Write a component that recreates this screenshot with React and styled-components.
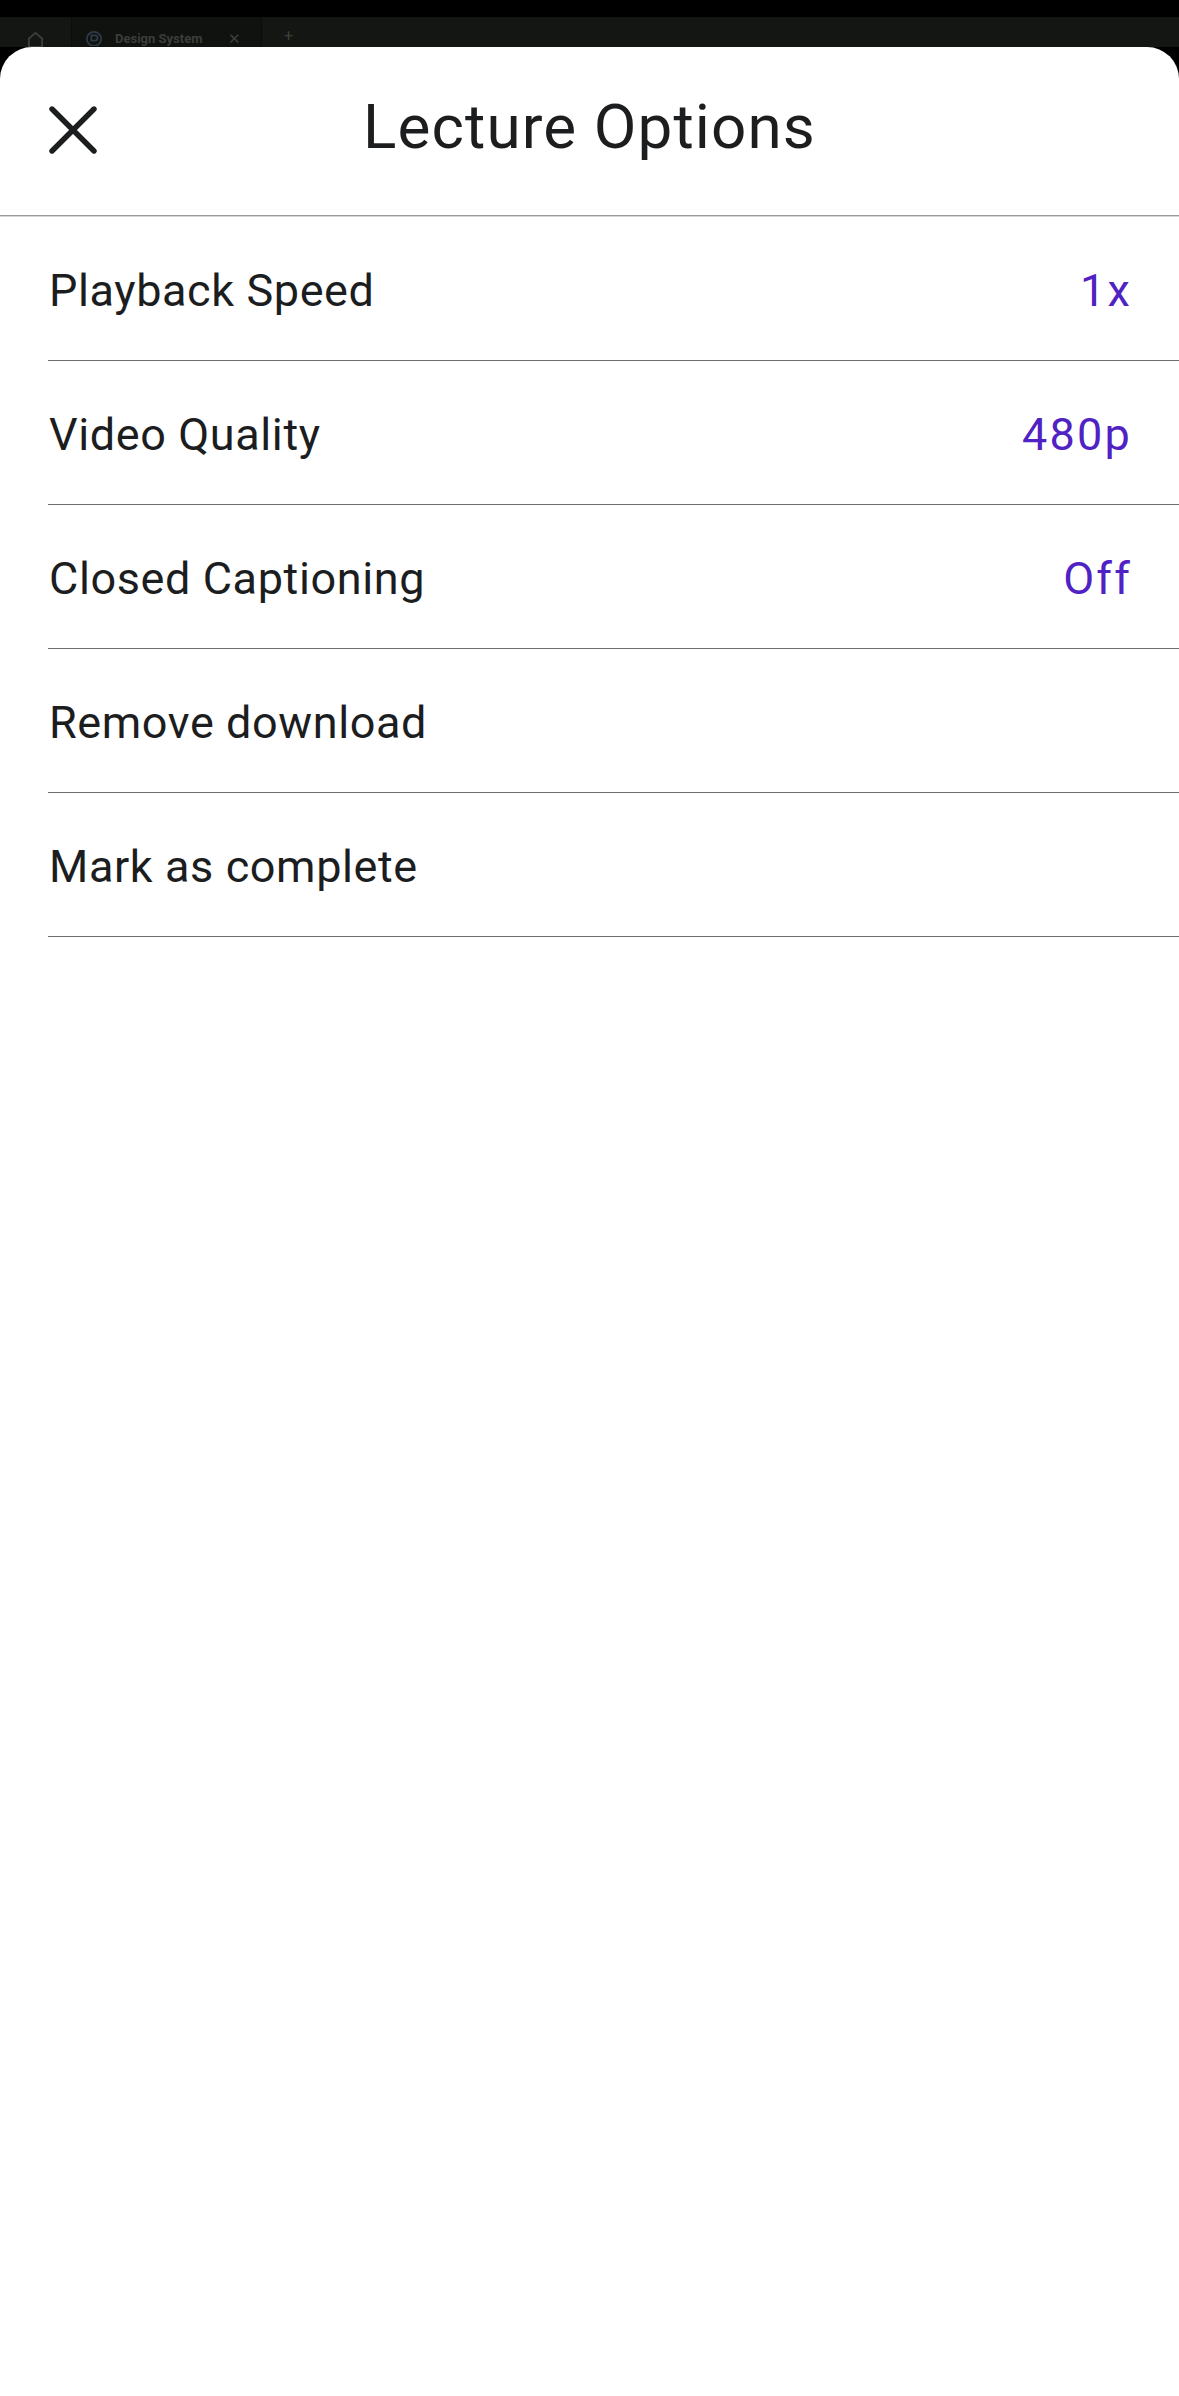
import React from "react";
import styled, { createGlobalStyle } from "styled-components";

const GlobalStyle = createGlobalStyle`
  html, body {
    margin: 0;
    padding: 0;
    background: #000;
  }
  body {
    font-family: Roboto, "Liberation Sans", sans-serif;
    -webkit-font-smoothing: antialiased;
  }
`;

const colors = {
  text: "#1c1d1f",
  purple: "#5022c3",
  divider: "#6e6e6e",
  faint: "#3b3e3a",
};

const Screen = styled.div`
  width: 1179px;
  min-height: 2396px;
  display: flex;
  flex-direction: column;
  background: #000;
`;

const StatusBar = styled.div`
  height: 17px;
  background: #000;
`;

const TabBar = styled.div`
  height: 30px;
  overflow: hidden;
  display: flex;
  align-items: stretch;
  background: #141613;
  color: ${colors.faint};
  font-size: 13px;
  line-height: 14px;
  font-weight: 700;
`;

const HomeSlot = styled.div`
  width: 72px;
  display: flex;
  align-items: flex-end;
  justify-content: center;
  box-sizing: border-box;
  border-right: 1px solid #0b0c0a;
`;

const Tab = styled.div`
  width: 190px;
  display: flex;
  align-items: flex-end;
  gap: 12px;
  padding: 0 0 1px 13px;
  box-sizing: border-box;
  background: #10120f;
  border-right: 1px solid #0b0c0a;
`;

const TabLabel = styled.span`
  flex: 1;
  white-space: nowrap;
`;

const TabClose = styled.span`
  padding-right: 20px;
  font-weight: 400;
  font-size: 15px;
`;

const PlusSlot = styled.div`
  display: flex;
  align-items: flex-end;
  padding: 0 0 2px 22px;
  font-size: 16px;
  line-height: 18px;
  font-weight: 400;
`;

const Sheet = styled.div`
  flex: 1;
  background: #fff;
  border-radius: 32px 32px 0 0;
  display: flex;
  flex-direction: column;
`;

const Header = styled.header`
  height: 168px;
  display: grid;
  grid-template-columns: 1fr auto 1fr;
  align-items: center;
  padding: 0 49px;
  border-bottom: 1px solid #9a9a9a;
  box-shadow: 0 1px 0 #d4d6d8;
  margin-bottom: 1px;
`;

const CloseButton = styled.button`
  width: 48px;
  height: 48px;
  padding: 0;
  border: none;
  background: none;
  justify-self: start;
  display: flex;
  margin-bottom: 2px;
`;

const Title = styled.h1`
  margin: 0 0 10px;
  font-size: 62px;
  font-weight: 400;
  color: ${colors.text};
  letter-spacing: 1.1px;
`;

const OptionList = styled.ul`
  list-style: none;
  margin: 0;
  padding: 0 0 0 48px;
`;

const OptionRow = styled.li`
  display: flex;
  align-items: center;
  justify-content: space-between;
  padding: 3px 47px 0 0;
  box-sizing: border-box;
  height: 144px;
  border-bottom: 1px solid ${colors.divider};
  font-size: 45px;
  color: ${colors.text};
`;

const OptionLabel = styled.span`
  padding-left: 1px;
  letter-spacing: 0.6px;
`;

const OptionValue = styled.span`
  color: ${colors.purple};
  letter-spacing: 2.2px;
`;

const CloseIcon = () => (
  <svg width="48" height="48" viewBox="0 0 48 48">
    <path d="M3 3 L45 45 M45 3 L3 45" stroke={colors.text} strokeWidth="5.4" strokeLinecap="round" />
  </svg>
);

const HomeIcon = () => (
  <svg width="17" height="16" viewBox="0 0 18 17" fill="none" stroke={colors.faint} strokeWidth="2">
    <path d="M2 8 L9 2 L16 8 V17 H2 Z" />
  </svg>
);

const TabIcon = () => (
  <svg width="18" height="16" viewBox="0 0 20 18" fill="none" stroke="#2f3a4a" strokeWidth="2">
    <circle cx="10" cy="10" r="8" />
    <path d="M7 6 h4 a3 3 0 0 1 0 6 h-4 z" />
  </svg>
);

const options = [
  { label: "Playback Speed", value: "1x" },
  { label: "Video Quality", value: "480p" },
  { label: "Closed Captioning", value: "Off" },
  { label: "Remove download" },
  { label: "Mark as complete" },
];

const App = () => (
  <Screen>
    <GlobalStyle />
    <StatusBar />
    <TabBar>
      <HomeSlot>
        <HomeIcon />
      </HomeSlot>
      <Tab>
        <TabIcon />
        <TabLabel>Design System</TabLabel>
        <TabClose>✕</TabClose>
      </Tab>
      <PlusSlot>+</PlusSlot>
    </TabBar>
    <Sheet>
      <Header>
        <CloseButton aria-label="Close">
          <CloseIcon />
        </CloseButton>
        <Title>Lecture Options</Title>
        <span />
      </Header>
      <OptionList>
        {options.map((o) => (
          <OptionRow key={o.label}>
            <OptionLabel>{o.label}</OptionLabel>
            {o.value && <OptionValue>{o.value}</OptionValue>}
          </OptionRow>
        ))}
      </OptionList>
    </Sheet>
  </Screen>
);

export default App;
